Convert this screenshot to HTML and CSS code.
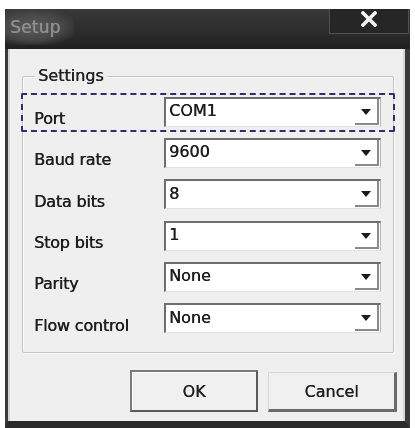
FILE: index.html
```html
<!DOCTYPE html>
<html>
<head>
<meta charset="utf-8">
<link rel="stylesheet" href="styles.css">
</head>
<body>
<div class="window">
  <div class="titlebar">
    <div class="title"><span>Setup</span></div>
    <div class="close">
      <svg width="16" height="16" viewBox="0 0 16 16"><path d="M2 2 L14 14 M14 2 L2 14" stroke="#f4f4f4" stroke-width="3.6" stroke-linecap="square"/></svg>
    </div>
  </div>
  <div class="client">
    <div class="group">
      <span class="legend">Settings</span>
      <div class="rows">
        <div class="row focused">
          <span class="label">Port</span>
          <div class="combo"><span class="value">COM1</span><span class="drop"><i class="arrow"></i></span></div>
        </div>
        <div class="row">
          <span class="label">Baud rate</span>
          <div class="combo"><span class="value">9600</span><span class="drop"><i class="arrow"></i></span></div>
        </div>
        <div class="row">
          <span class="label">Data bits</span>
          <div class="combo"><span class="value">8</span><span class="drop"><i class="arrow"></i></span></div>
        </div>
        <div class="row">
          <span class="label">Stop bits</span>
          <div class="combo"><span class="value">1</span><span class="drop"><i class="arrow"></i></span></div>
        </div>
        <div class="row">
          <span class="label">Parity</span>
          <div class="combo"><span class="value">None</span><span class="drop"><i class="arrow"></i></span></div>
        </div>
        <div class="row">
          <span class="label">Flow control</span>
          <div class="combo"><span class="value">None</span><span class="drop"><i class="arrow"></i></span></div>
        </div>
      </div>
    </div>
    <div class="buttons">
      <div class="btn ok">OK</div>
      <div class="btn cancel">Cancel</div>
    </div>
  </div>
</div>
</body>
</html>
```

FILE: styles.css
```css
html, body {
  margin: 0;
  padding: 0;
  background: #ffffff;
  overflow: hidden;
}
body {
  width: 415px;
  height: 428px;
  font-family: "DejaVu Sans", sans-serif;
}
.window {
  width: 405px;
  margin: 9px 0 0 5px;
  filter: blur(0.7px);
}
.titlebar {
  height: 40px;
  background: linear-gradient(to bottom, #383838 0%, #2c2c2c 60%, #1f1f1f 100%);
  display: flex;
  justify-content: space-between;
  align-items: flex-start;
}
.title {
  height: 36px;
  display: flex;
  align-items: center;
  padding: 0 14px 0 5px;
  background: radial-gradient(ellipse at 40% 50%, #5a5a5a 0%, #474747 50%, rgba(60,60,60,0) 80%);
}
.title span {
  font-size: 17px;
  color: #8e8e8e;
  letter-spacing: 0.2px;
  text-shadow: 0.4px 0 0 #8e8e8e;
}
.close {
  width: 80px;
  height: 25px;
  margin-right: 1px;
  background: #262626;
  border: 1px solid #505050;
  border-top: none;
  display: flex;
  justify-content: center;
  align-items: flex-start;
  padding-top: 1px;
  box-sizing: border-box;
}
.close svg {
  margin-top: 1px;
}
.client {
  height: 372px;
  background: #efefef;
  border-left: 3px solid #3a3a3a;
  border-right: 5px solid #3a3a3a;
  border-bottom: 7px solid #2a2a2a;
  box-shadow: inset 2px 0 0 #d6d6d6, inset -2px 0 0 #d6d6d6;
  display: flex;
  flex-direction: column;
}
.group {
  position: relative;
  margin: 27px 11px 0 14px;
  height: 275px;
  border: 1px solid #c4c4c4;
  box-shadow: inset 1px 1px 0 #fbfbfb, 1px 1px 0 #fbfbfb;
  border-radius: 2px;
}
.legend {
  position: absolute;
  left: 12px;
  top: -10px;
  padding: 0 3px;
  background: #efefef;
  font-size: 16px;
  line-height: 18px;
  color: #222;
  text-shadow: 0.4px 0 0 #222;
}
.rows {
  display: grid;
  grid-template-rows: repeat(6, 41.3px);
  padding-top: 14px;
}
.row {
  position: relative;
  display: grid;
  grid-template-columns: 1fr 217px;
  align-items: center;
  padding: 0 12px 0 11px;
}
.row.focused::after {
  content: "";
  position: absolute;
  left: -2px;
  right: -2px;
  top: 2px;
  bottom: 0;
  border: 2px dashed #2c2f6e;
  border-radius: 2px;
}
.label {
  font-size: 16px;
  color: #1e1e1e;
  padding-top: 14px;
  letter-spacing: -0.2px;
  text-shadow: 0.5px 0 0 #1e1e1e;
}
.combo {
  height: 30px;
  box-sizing: border-box;
  background: #ffffff;
  border-top: 2px solid #6e6e6e;
  border-left: 2px solid #6e6e6e;
  border-right: 1px solid #b8b8b8;
  border-bottom: 1px solid #e2e2e2;
  display: flex;
  align-items: stretch;
}
.value {
  flex: 1;
  font-size: 16px;
  color: #1e1e1e;
  padding-left: 3px;
  display: flex;
  align-items: center;
  padding-bottom: 3px;
  text-shadow: 0.4px 0 0 #1e1e1e;
}
.drop {
  width: 22px;
  margin: 0 1px 1px 0;
  border-right: 2px solid #8a8a8a;
  border-bottom: 2px solid #8a8a8a;
  display: flex;
  align-items: center;
  justify-content: center;
}
.arrow {
  width: 0;
  height: 0;
  border-left: 5px solid transparent;
  border-right: 5px solid transparent;
  border-top: 6px solid #1a1a1a;
  margin-top: 2px;
}
.buttons {
  display: flex;
  justify-content: flex-end;
  gap: 10px;
  margin-top: 17px;
  padding-right: 8px;
  align-items: flex-end;
}
.btn {
  height: 42px;
  box-sizing: border-box;
  display: flex;
  align-items: center;
  justify-content: center;
  font-size: 16px;
  color: #1e1e1e;
  background: #f0f0f0;
  text-shadow: 0.4px 0 0 #1e1e1e;
}
.ok {
  width: 128px;
  border: 2px solid #7a7a7a;
  border-right-color: #5a5a5a;
  border-bottom-color: #5a5a5a;
  box-shadow: inset 1px 1px 0 #ffffff;
}
.cancel {
  width: 129px;
  height: 40px;
  border-top: 1px solid #d8d8d8;
  border-left: 1px solid #d8d8d8;
  border-right: 3px solid #6a6a6a;
  border-bottom: 3px solid #6a6a6a;
}
```
